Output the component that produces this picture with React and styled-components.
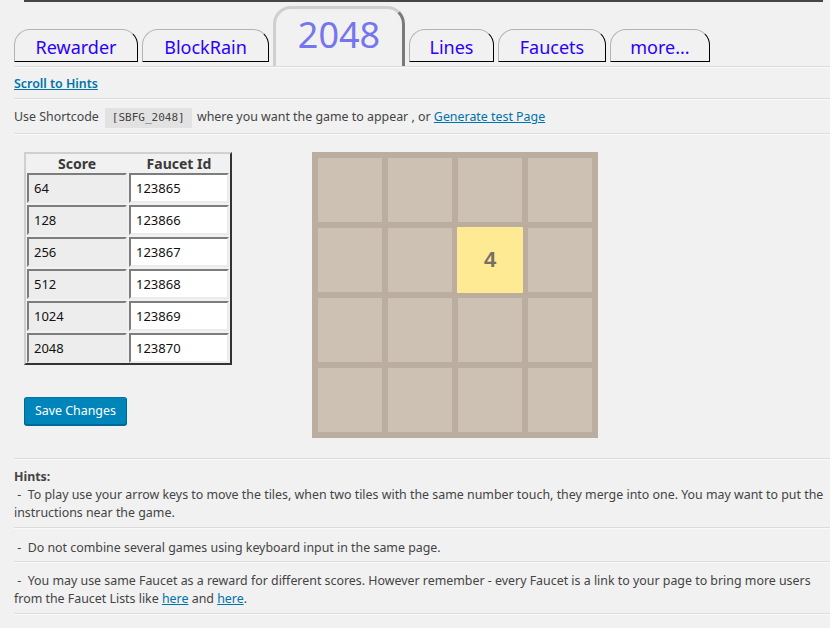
import React from "react";
import styled, { createGlobalStyle } from "styled-components";

const Global = createGlobalStyle`
  html, body { margin: 0; padding: 0; background: #f1f1f1; }
  body {
    font-family: "Noto Sans", "Open Sans", sans-serif;
    font-size: 12.4px;
    line-height: 18px;
    color: #444;
    overflow: hidden;
  }
`;

const Page = styled.div`
  width: 830px;
  height: 628px;
  padding-left: 14px;
  box-sizing: border-box;
  overflow: hidden;
`;

const TopRule = styled.div`
  height: 0;
  border-bottom: 2px solid #464646;
  margin: 0 7px 0 10px;
`;

const TabBar = styled.nav`
  display: flex;
  align-items: flex-end;
  gap: 4px;
  padding-top: 4px;
`;

const Tab = styled.a`
  box-sizing: border-box;
  display: flex;
  align-items: center;
  justify-content: center;
  width: ${(p) => p.$w}px;
  height: 33px;
  margin-bottom: 4px;
  padding-top: 3px;
  border: 1px solid;
  border-color: #b4b4b4 #000 #000 #b4b4b4;
  border-radius: 16px 16px 0 0;
  font-size: 18px;
  line-height: 1;
  color: #2a00ff;
  text-decoration: none;
`;

const ActiveTab = styled.a`
  box-sizing: border-box;
  display: flex;
  align-items: center;
  justify-content: center;
  width: ${(p) => p.$w}px;
  height: 60px;
  padding-bottom: 6px;
  border: 3px solid;
  border-color: #cfcfcf #7a7a7a transparent #cfcfcf;
  border-bottom: 0;
  border-radius: 18px 18px 0 0;
  font-size: 36px;
  line-height: 1;
  color: #7575f0;
  text-decoration: none;
`;

const Sep = styled.div`
  border-top: 1px solid #dcdcdc;
  border-bottom: 1px solid #fafafa;
`;

const Block = styled.div`
  padding: ${(p) => p.$pad};
`;

const Link = styled.a`
  color: #0073aa;
  text-decoration: underline;
  font-weight: ${(p) => (p.$bold ? 600 : 400)};
`;

const Code = styled.code`
  display: inline-block;
  font-family: "DejaVu Sans Mono", "Liberation Mono", monospace;
  font-size: 11px;
  line-height: 20px;
  padding: 0 7px;
  margin: 0 2px 0 6px;
  background: #e2e2e2;
  color: #444;
`;

const Main = styled.div`
  display: flex;
  align-items: flex-start;
  padding: 17px 0 20px 10px;
`;

const LeftCol = styled.div`
  display: flex;
  flex-direction: column;
  align-items: flex-start;
  gap: 32px;
`;

const ScoreTable = styled.div`
  display: grid;
  grid-template-columns: 100px 100px;
  column-gap: 2px;
  row-gap: 2px;
  padding: 0 1px;
  border: 2px solid;
  border-color: #d0d0d0 #333 #333 #d0d0d0;
`;

const HeadCell = styled.div`
  height: 17px;
  line-height: 19px;
  text-align: center;
  font-weight: 700;
  font-size: 14px;
  color: #3a3a3a;
`;

const Field = styled.input`
  box-sizing: border-box;
  width: 100px;
  height: 30px;
  margin: 0;
  padding: 0 5px;
  border: 2px solid;
  border-color: #7d7d7d #ececec #ececec #7d7d7d;
  background: ${(p) => (p.$ro ? "#ededed" : "#fff")};
  font-family: "Noto Sans", "Open Sans", sans-serif;
  font-size: 13px;
  color: #111;
  outline: none;
`;

const SaveButton = styled.button`
  box-sizing: border-box;
  height: 28px;
  padding: 0 10px 1px;
  border: 1px solid;
  border-color: #0073aa #006799 #006799;
  border-radius: 3px;
  box-shadow: 0 1px 0 #006799;
  background: #0085ba;
  color: #fff;
  font-family: "Noto Sans", "Open Sans", sans-serif;
  font-size: 12.4px;
  cursor: pointer;
`;

const Board = styled.div`
  margin-left: 80px;
  display: grid;
  grid-template-columns: repeat(4, 64px);
  grid-template-rows: repeat(4, 64px);
  gap: 6px;
  padding: 6px;
  background: #bbada0;
`;

const Tile = styled.div`
  display: flex;
  align-items: center;
  justify-content: center;
  background: ${(p) => (p.$v ? "#ffea94" : "#cdc1b4")};
  margin: ${(p) => (p.$v ? "-1px" : "0")};
  font-family: "Liberation Sans", Arial, sans-serif;
  font-weight: 700;
  font-size: 22px;
  color: #776e65;
`;

const HintTitle = styled.div`
  font-weight: 700;
`;

const tabs = [
  { label: "Rewarder", w: 124 },
  { label: "BlockRain", w: 127 },
  { label: "2048", w: 132, active: true },
  { label: "Lines", w: 85 },
  { label: "Faucets", w: 108 },
  { label: "more...", w: 100 },
];

const rows = [
  ["64", "123865"],
  ["128", "123866"],
  ["256", "123867"],
  ["512", "123868"],
  ["1024", "123869"],
  ["2048", "123870"],
];

const cells = Array.from({ length: 16 }, (_, i) => (i === 6 ? 4 : 0));

export default function App() {
  return (
    <Page>
      <Global />
      <TopRule />
      <TabBar>
        {tabs.map((t) =>
          t.active ? (
            <ActiveTab key={t.label} $w={t.w}>{t.label}</ActiveTab>
          ) : (
            <Tab key={t.label} $w={t.w}>{t.label}</Tab>
          )
        )}
      </TabBar>
      <Sep />
      <Block $pad="7px 0 5px">
        <Link $bold>Scroll to Hints</Link>
      </Block>
      <Sep />
      <Block $pad="8px 0 5px">
        Use Shortcode<Code>[SBFG_2048]</Code> where you want the game to appear , or{" "}
        <Link>Generate test Page</Link>
      </Block>
      <Sep />
      <Main>
        <LeftCol>
          <ScoreTable>
            <HeadCell>Score</HeadCell>
            <HeadCell>Faucet Id</HeadCell>
            {rows.map(([s, f]) => (
              <React.Fragment key={s}>
                <Field $ro readOnly defaultValue={s} />
                <Field defaultValue={f} />
              </React.Fragment>
            ))}
          </ScoreTable>
          <SaveButton>Save Changes</SaveButton>
        </LeftCol>
        <Board>
          {cells.map((v, i) => (
            <Tile key={i} $v={v}>{v ? v : null}</Tile>
          ))}
        </Board>
      </Main>
      <Sep />
      <Block $pad="8px 0 5px">
        <HintTitle>Hints:</HintTitle>
        &nbsp;-&nbsp; To play use your arrow keys to move the tiles, when two tiles with the same number touch, they merge into one. You may want to put the instructions near the game.
      </Block>
      <Sep />
      <Block $pad="10px 0 4px">
        &nbsp;-&nbsp; Do not combine several games using keyboard input in the same page.
      </Block>
      <Sep />
      <Block $pad="9px 0 5px">
        &nbsp;-&nbsp; You may use same Faucet as a reward for different scores. However remember - every Faucet is a link to your page to bring more users from the Faucet Lists like{" "}
        <Link>here</Link> and <Link>here</Link>.
      </Block>
      <Sep />
    </Page>
  );
}
